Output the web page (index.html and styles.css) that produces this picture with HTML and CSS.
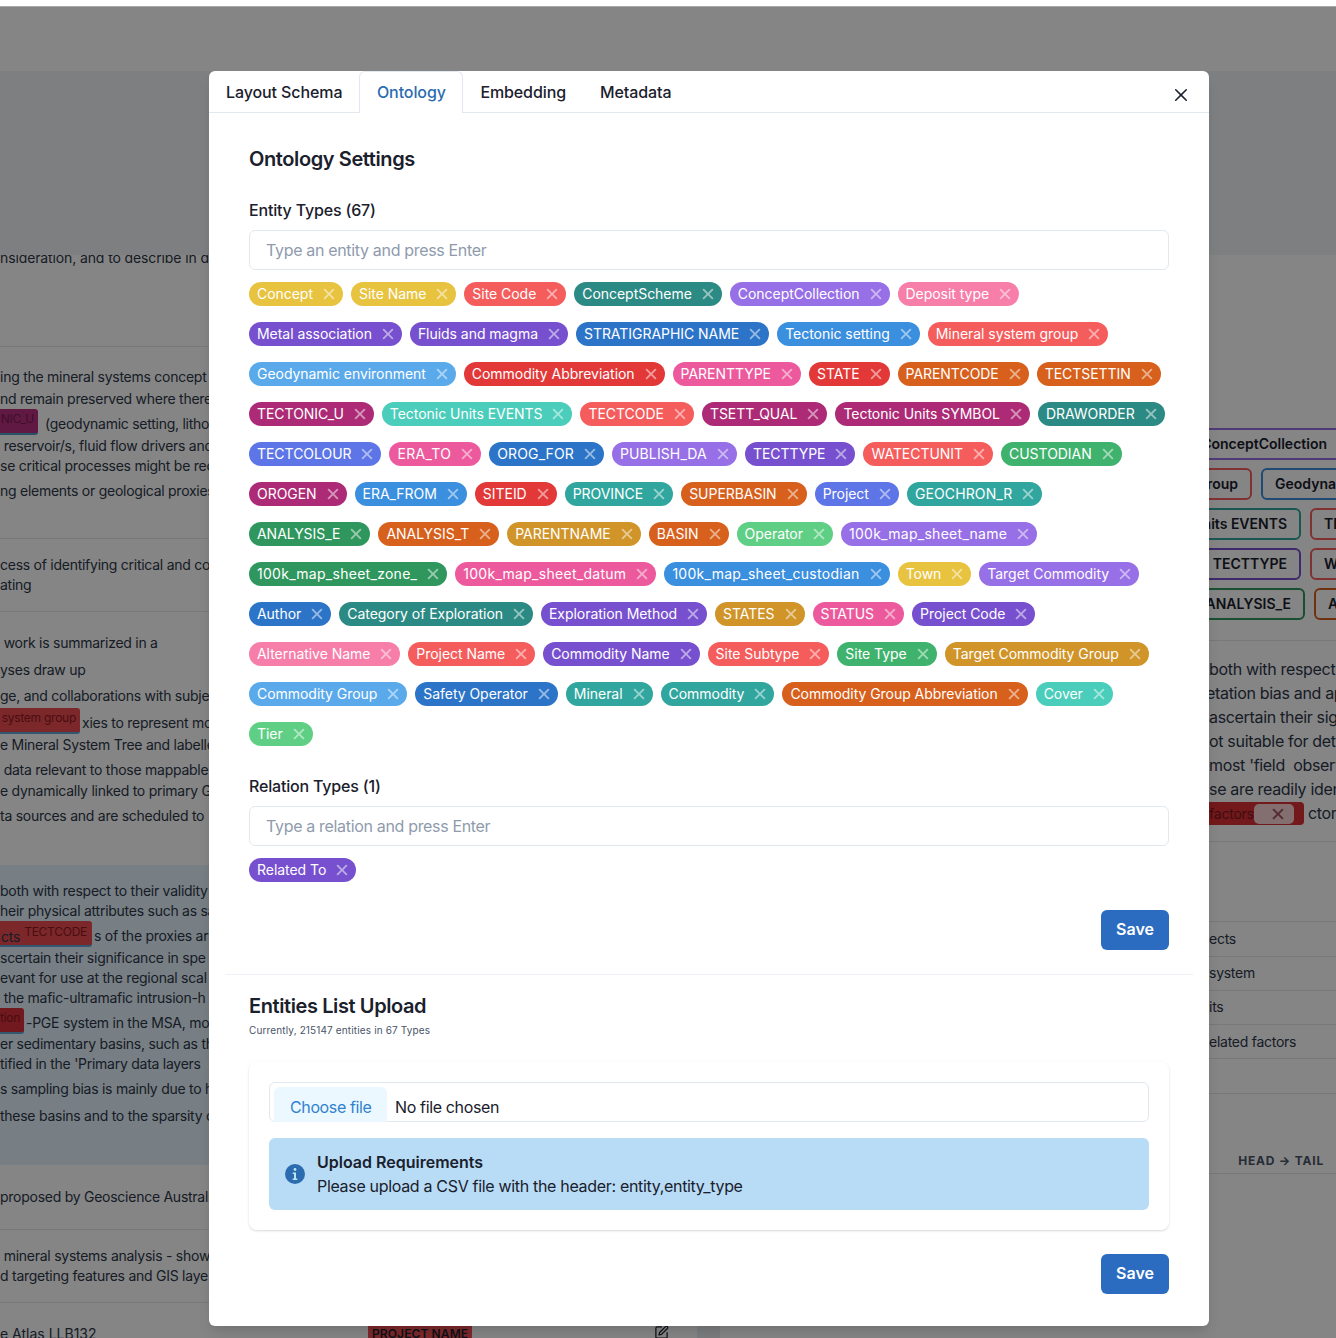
FILE: index.html
```html
<!DOCTYPE html>
<html lang="en">
<head>
<meta charset="utf-8">
<title>Ontology Settings</title>
<link rel="stylesheet" href="styles.css">
</head>
<body>
<svg class="sprite" aria-hidden="true"><symbol id="ix" viewBox="0 0 512 512"><path d="M289.94 256l95-95A24 24 0 00351 127l-95 95-95-95a24 24 0 00-34 34l95 95-95 95a24 24 0 1034 34l95-95 95 95a24 24 0 0034-34z"/></symbol></svg>
<div class="app">
  <div class="topbar"></div>
  <div class="band"></div>
  <div class="content">
    <div class="col-left">
      <div class="row ra"><div class="ln flat">nsideration, and to describe in d</div></div>
      <div class="row rb">
        <div class="ln">ing the mineral systems concept</div>
        <div class="ln mt2">nd remain preserved where there</div>
        <div class="ln mt5"><span class="chip mag w38">NIC_U</span><span class="after g7">(geodynamic setting, litho</span></div>
        <div class="ln mt2">&nbsp;reservoir/s, fluid flow drivers and</div>
        <div class="ln">se critical processes might be rec</div>
        <div class="ln mt5">ng elements or geological proxies</div>
      </div>
      <div class="row rc">
        <div class="ln">cess of identifying critical and co</div>
        <div class="ln">ating</div>
      </div>
      <div class="row rd">
        <div class="ln">&nbsp;work is summarized in a</div>
        <div class="ln mt7">yses draw up</div>
        <div class="ln mt6">ge, and collaborations with subjec</div>
        <div class="ln mt7"><span class="chip red w80">system group</span><span class="after g2">xies to represent mo</span></div>
        <div class="ln mt2">e Mineral System Tree and labelle</div>
        <div class="ln mt5">&nbsp;data relevant to those mappable</div>
        <div class="ln mt1">e dynamically linked to primary G</div>
        <div class="ln mt5">ta sources and are scheduled to</div>
      </div>
      <div class="row re">
        <div class="ln">both with respect to their validity</div>
        <div class="ln">heir physical attributes such as sa</div>
        <div class="ln mt5"><span class="chip red w92"><span class="base">cts</span><span class="raised">TECTCODE</span></span><span class="after g2">s of the proxies ar</span></div>
        <div class="ln mt2">scertain their significance in spe</div>
        <div class="ln">evant for use at the regional scal</div>
        <div class="ln">&nbsp;the mafic-ultramafic intrusion-h</div>
        <div class="ln mt5"><span class="chip crim w24">tion</span><span class="after g2">-PGE system in the MSA, mo</span></div>
        <div class="ln mt1">er sedimentary basins, such as th</div>
        <div class="ln">tified in the 'Primary data layers</div>
        <div class="ln mt5">s sampling bias is mainly due to h</div>
        <div class="ln mt7">these basins and to the sparsity c</div>
      </div>
      <div class="row rf"><div class="ln">proposed by Geoscience Australia</div></div>
      <div class="row rg">
        <div class="ln">&nbsp;mineral systems analysis - show</div>
        <div class="ln">d targeting features and GIS laye</div>
      </div>
      <div class="row rh"><div class="ln">e Atlas LLB132</div></div>
    </div>
    <div class="col-mid">
      <div class="mid-row">
        <span class="name-chip">PROJECT NAME</span>
        <svg class="edit" viewBox="0 0 24 24" fill="none" stroke="currentColor" stroke-width="2" stroke-linecap="round" stroke-linejoin="round"><path d="M12 3H5a2 2 0 0 0-2 2v14a2 2 0 0 0 2 2h14a2 2 0 0 0 2-2v-7"/><path d="M18.4 2.6a2.1 2.1 0 1 1 3 3L12 15l-4 1 1-4z"/></svg>
        <span class="mid-block"></span>
      </div>
    </div>
    <div class="col-right">
      <div class="rchips">
        <div class="rrow"><div class="slot s132"><span class="rchip b-purl">ConceptCollection</span></div></div>
        <div class="rrow"><div class="slot s43"><span class="rchip b-red4">Mineral system group</span></div><span class="rchip b-blue">Geodynamic environment</span></div>
        <div class="rrow"><div class="slot s92"><span class="rchip b-tealm">Tectonic Units EVENTS</span></div><span class="rchip b-red4">TECTCODE</span></div>
        <div class="rrow"><div class="slot s92"><span class="rchip b-purd">TECTTYPE</span></div><span class="rchip b-red4">WATECTUNIT</span></div>
        <div class="rrow"><div class="slot s96"><span class="rchip b-greend">ANALYSIS_E</span></div><span class="rchip b-orange">ANALYSIS_T</span></div>
      </div>
      <div class="rtext">
        <div class="rl">both with respect</div>
        <div class="rl">etation bias and ap</div>
        <div class="rl">ascertain their sig</div>
        <div class="rl">ot suitable for deta</div>
        <div class="rl">most 'field&nbsp; observ</div>
        <div class="rl">se are readily iden</div>
        <div class="rl"><span class="rfactor"><span>factors</span><span class="rfx"><svg class="rfx-i"><use href="#ix"/></svg></span></span><span class="after g4">ctor</span></div>
      </div>
      <div class="rgap"></div>
      <div class="trow t35">ects</div>
      <div class="trow up">system</div>
      <div class="trow up">its</div>
      <div class="trow">elated factors</div>
      <div class="trow t35"></div>
      <div class="thead">HEAD → TAIL</div>
    </div>
  </div>
</div>
<div class="overlay"></div>

<section class="modal">
  <nav class="tabs">
    <span class="tab">Layout Schema</span>
    <span class="tab active">Ontology</span>
    <span class="tab">Embedding</span>
    <span class="tab">Metadata</span>
  </nav>
  <button class="close" aria-label="Close"><svg viewBox="0 0 24 24"><path d="M.439,21.44a1.5,1.5,0,0,0,2.122,2.121L11.823,14.3a.25.25,0,0,1,.354,0l9.262,9.263a1.5,1.5,0,1,0,2.122-2.121L14.3,12.177a.25.25,0,0,1,0-.354l9.263-9.262A1.5,1.5,0,0,0,21.439.44L12.177,9.7a.25.25,0,0,1-.354,0L2.561.44A1.5,1.5,0,0,0,.439,2.561L9.7,11.823a.25.25,0,0,1,0,.354Z"/></svg></button>

  <div class="panel">
    <h2 class="h">Ontology Settings</h2>
    <label class="label first">Entity Types (67)</label>
    <input class="input" placeholder="Type an entity and press Enter">
    <div class="tags">
      <span class="tag yellow">Concept<svg class="x"><use href="#ix"/></svg></span>
      <span class="tag yellow">Site Name<svg class="x"><use href="#ix"/></svg></span>
      <span class="tag red4">Site Code<svg class="x"><use href="#ix"/></svg></span>
      <span class="tag teald">ConceptScheme<svg class="x"><use href="#ix"/></svg></span>
      <span class="tag purl">ConceptCollection<svg class="x"><use href="#ix"/></svg></span>
      <span class="tag pinkl">Deposit type<svg class="x"><use href="#ix"/></svg></span>
      <span class="tag purd">Metal association<svg class="x"><use href="#ix"/></svg></span>
      <span class="tag purd">Fluids and magma<svg class="x"><use href="#ix"/></svg></span>
      <span class="tag blued">STRATIGRAPHIC NAME<svg class="x"><use href="#ix"/></svg></span>
      <span class="tag blue">Tectonic setting<svg class="x"><use href="#ix"/></svg></span>
      <span class="tag red4">Mineral system group<svg class="x"><use href="#ix"/></svg></span>
      <span class="tag bluel">Geodynamic environment<svg class="x"><use href="#ix"/></svg></span>
      <span class="tag red6">Commodity Abbreviation<svg class="x"><use href="#ix"/></svg></span>
      <span class="tag pink">PARENTTYPE<svg class="x"><use href="#ix"/></svg></span>
      <span class="tag red6">STATE<svg class="x"><use href="#ix"/></svg></span>
      <span class="tag orange">PARENTCODE<svg class="x"><use href="#ix"/></svg></span>
      <span class="tag orange">TECTSETTIN<svg class="x"><use href="#ix"/></svg></span>
      <span class="tag mag">TECTONIC_U<svg class="x"><use href="#ix"/></svg></span>
      <span class="tag tealb">Tectonic Units EVENTS<svg class="x"><use href="#ix"/></svg></span>
      <span class="tag red4">TECTCODE<svg class="x"><use href="#ix"/></svg></span>
      <span class="tag mag">TSETT_QUAL<svg class="x"><use href="#ix"/></svg></span>
      <span class="tag mag">Tectonic Units SYMBOL<svg class="x"><use href="#ix"/></svg></span>
      <span class="tag teald">DRAWORDER<svg class="x"><use href="#ix"/></svg></span>
      <span class="tag indigo">TECTCOLOUR<svg class="x"><use href="#ix"/></svg></span>
      <span class="tag pink wide2">ERA_TO<svg class="x"><use href="#ix"/></svg></span>
      <span class="tag blued wide1">OROG_FOR<svg class="x"><use href="#ix"/></svg></span>
      <span class="tag purl wide1">PUBLISH_DA<svg class="x"><use href="#ix"/></svg></span>
      <span class="tag purd">TECTTYPE<svg class="x"><use href="#ix"/></svg></span>
      <span class="tag red4">WATECTUNIT<svg class="x"><use href="#ix"/></svg></span>
      <span class="tag green">CUSTODIAN<svg class="x"><use href="#ix"/></svg></span>
      <span class="tag mag">OROGEN<svg class="x"><use href="#ix"/></svg></span>
      <span class="tag blue">ERA_FROM<svg class="x"><use href="#ix"/></svg></span>
      <span class="tag red6">SITEID<svg class="x"><use href="#ix"/></svg></span>
      <span class="tag tealm">PROVINCE<svg class="x"><use href="#ix"/></svg></span>
      <span class="tag orange">SUPERBASIN<svg class="x"><use href="#ix"/></svg></span>
      <span class="tag indigo">Project<svg class="x"><use href="#ix"/></svg></span>
      <span class="tag tealm wide1">GEOCHRON_R<svg class="x"><use href="#ix"/></svg></span>
      <span class="tag greend">ANALYSIS_E<svg class="x"><use href="#ix"/></svg></span>
      <span class="tag orange">ANALYSIS_T<svg class="x"><use href="#ix"/></svg></span>
      <span class="tag gold">PARENTNAME<svg class="x"><use href="#ix"/></svg></span>
      <span class="tag orange">BASIN<svg class="x"><use href="#ix"/></svg></span>
      <span class="tag greenl">Operator<svg class="x"><use href="#ix"/></svg></span>
      <span class="tag purl wide3">100k_map_sheet_name<svg class="x"><use href="#ix"/></svg></span>
      <span class="tag greend wide3">100k_map_sheet_zone_<svg class="x"><use href="#ix"/></svg></span>
      <span class="tag pink wide3">100k_map_sheet_datum<svg class="x"><use href="#ix"/></svg></span>
      <span class="tag blue wide3">100k_map_sheet_custodian<svg class="x"><use href="#ix"/></svg></span>
      <span class="tag yellow">Town<svg class="x"><use href="#ix"/></svg></span>
      <span class="tag purl">Target Commodity<svg class="x"><use href="#ix"/></svg></span>
      <span class="tag blued">Author<svg class="x"><use href="#ix"/></svg></span>
      <span class="tag teald">Category of Exploration<svg class="x"><use href="#ix"/></svg></span>
      <span class="tag purd">Exploration Method<svg class="x"><use href="#ix"/></svg></span>
      <span class="tag gold">STATES<svg class="x"><use href="#ix"/></svg></span>
      <span class="tag pink">STATUS<svg class="x"><use href="#ix"/></svg></span>
      <span class="tag purd">Project Code<svg class="x"><use href="#ix"/></svg></span>
      <span class="tag pinkl">Alternative Name<svg class="x"><use href="#ix"/></svg></span>
      <span class="tag red4">Project Name<svg class="x"><use href="#ix"/></svg></span>
      <span class="tag purd">Commodity Name<svg class="x"><use href="#ix"/></svg></span>
      <span class="tag red4">Site Subtype<svg class="x"><use href="#ix"/></svg></span>
      <span class="tag green">Site Type<svg class="x"><use href="#ix"/></svg></span>
      <span class="tag gold">Target Commodity Group<svg class="x"><use href="#ix"/></svg></span>
      <span class="tag bluel">Commodity Group<svg class="x"><use href="#ix"/></svg></span>
      <span class="tag blued">Safety Operator<svg class="x"><use href="#ix"/></svg></span>
      <span class="tag tealm">Mineral<svg class="x"><use href="#ix"/></svg></span>
      <span class="tag tealm">Commodity<svg class="x"><use href="#ix"/></svg></span>
      <span class="tag orange">Commodity Group Abbreviation<svg class="x"><use href="#ix"/></svg></span>
      <span class="tag tealb">Cover<svg class="x"><use href="#ix"/></svg></span>
      <span class="tag greenl">Tier<svg class="x"><use href="#ix"/></svg></span>
    </div>
    <label class="label second">Relation Types (1)</label>
    <input class="input" placeholder="Type a relation and press Enter">
    <div class="tags">
      <span class="tag purd">Related To<svg class="x"><use href="#ix"/></svg></span>
    </div>
    <div class="actions top"><button class="save">Save</button></div>
  </div>

  <hr class="divider">

  <div class="panel lower">
    <h2 class="h">Entities List Upload</h2>
    <p class="note">Currently, 215147 entities in 67 Types</p>
    <div class="card">
      <div class="file">
        <span class="file-btn">Choose file</span>
        <span class="file-name">No file chosen</span>
      </div>
      <div class="alert">
        <svg class="alert-i" viewBox="0 0 24 24"><circle cx="12" cy="12" r="12" fill="#2b6cb0"/><circle cx="12" cy="6.6" r="1.7" fill="#bee3f8"/><path d="M9.2 10.3h4v7.2h1.6v1.6H9.2v-1.6h1.6v-5.6H9.2z" fill="#bee3f8"/></svg>
        <div>
          <div class="alert-t">Upload Requirements</div>
          <div class="alert-d">Please upload a CSV file with the header: entity,entity_type</div>
        </div>
      </div>
    </div>
    <div class="actions bottom"><button class="save">Save</button></div>
  </div>
</section>
</body>
</html>
```
FILE: styles.css
```css
* { box-sizing: border-box; }
html, body { margin: 0; padding: 0; }
body {
  position: relative;
  width: 1336px;
  height: 1338px;
  overflow: hidden;
  background: #fff;
  font-family: Inter, "Noto Sans", sans-serif;
  color: #1a202c;
}
.sprite { display: none; }

/* Page behind the dialog */
.app { display: flex; flex-direction: column; height: 1338px; }
.topbar { flex: none; height: 72px; margin-top: 6px; margin-bottom: -7px; border-top: 1px solid #a8a8a8; border-bottom: 1px solid #edeef0; }
.band { flex: none; height: 184px; background: #f2f3f5; position: relative; z-index: 1; }
.content { flex: 1; display: grid; grid-template-columns: 209px 1000px 127px; min-height: 0; overflow: hidden; font-size: 14px; letter-spacing: -.26px; color: #2d3748; }
.col-left, .col-right { overflow: hidden; white-space: nowrap; }
.row { border-bottom: 1px solid #e2e6eb; }
.ra { height: 92px; }
.rb { padding: 20px 0 37px; }
.rc { padding: 16px 0 16px; }
.rd { padding: 21px 0 39px; border-bottom: 0; }
.re { padding: 16px 0 39px; border-bottom: 0; background: #e5f3fe; }
.rf { padding: 22px 0 22px; }
.rg { padding: 16px 0 16px; }
.rh { padding: 21px 0 0; border-bottom: 0; letter-spacing: 0; }
.ln { display: flex; align-items: flex-start; height: 20px; line-height: 20px; }
.flat { height: 6px; line-height: 6px; letter-spacing: -.12px; }
.mt1 { margin-top: 1px; } .mt2 { margin-top: 2px; } .mt5 { margin-top: 5px; }
.mt6 { margin-top: 6px; } .mt7 { margin-top: 7px; }
.chip {
  flex: none; display: block; height: 26px; margin: -5px 0 -1px; padding: 0;
  border-radius: 0 3px 3px 0; border-bottom: 2px solid #63a5d8;
  font-size: 12px; line-height: 20px; text-align: right; padding-right: 4px; color: #7a1f2a;
  overflow: hidden;
}
.chip.mag { background: #b8307f; border-bottom-color: #4a9fc4; color: #7a1a58; }
.chip.red { background: #ee4c52; color: #8c1a20; }
.chip.crim { background: #d9303a; color: #8c1a20; }
.w38 { width: 38px; } .w80 { width: 80px; } .w92 { width: 92px; } .w24 { width: 24px; }
.base { font-size: 14px; position: relative; top: 6px; color: #2d3748; }
.raised { margin-left: 4px; margin-right: 1px; }
.after { flex: none; }
.g2 { margin-left: 2px; } .g4 { margin-left: 4px; } .g7 { margin-left: 7px; }

.col-mid { display: flex; flex-direction: column; justify-content: flex-end; }
.mid-row { display: flex; height: 14px; padding-left: 159px; align-items: flex-start; }
.name-chip { flex: none; width: 104px; height: 22px; line-height: 20px; padding-left: 4px; background: #ee5055; font-size: 12px; font-weight: 600; letter-spacing: .1px; white-space: nowrap; color: #1a202c; }
.edit { flex: none; width: 15px; height: 15px; margin-left: 182px; margin-top: 1px; color: #1a202c; }
.mid-block { flex: none; width: 23px; height: 14px; margin-left: 28px; background: #eceef0; }

.rchips { display: flex; flex-direction: column; gap: 8px; padding-top: 173px; letter-spacing: 0; }
.rrow { display: flex; gap: 9px; height: 32px; }
.slot { flex: none; display: flex; justify-content: flex-end; }
.s132 { width: 132px; } .s43 { width: 43px; } .s92 { width: 92px; } .s96 { width: 96px; }
.rchip { flex: none; display: block; height: 32px; padding: 0 12px; border: 2px solid; border-radius: 6px; background: #fff; font-weight: 600; line-height: 28px; color: #1a202c; }
.b-purl { border-color: #976fe6; } .b-red4 { border-color: #f56060; } .b-blue { border-color: #3b8fdf; }
.b-tealm { border-color: #30a69f; } .b-purd { border-color: #7750cf; } .b-greend { border-color: #2f975d; }
.b-orange { border-color: #d7601c; }
.rtext { margin-top: 20px; padding: 16px 0; border-top: 1px solid #e2e6eb; border-bottom: 1px solid #e2e6eb; font-size: 16px; letter-spacing: -.32px; }
.rl { display: flex; height: 24px; line-height: 24px; }
.rl:nth-child(2) { margin-left: -3px; }
.rfactor { flex: none; display: flex; align-items: center; width: 95px; height: 23px; margin-top: 1px; border-radius: 0 4px 4px 0; background: #dc2f35; color: #7a1a20; font-size: 14px; letter-spacing: -.22px; }
.rfx { display: flex; justify-content: center; width: 40px; height: 20px; padding-left: 8px; border-radius: 5px; background: #fbd5d5; }
.rfx-i { width: 20px; height: 20px; fill: #a05060; }
.rgap { height: 79px; }
.trow { height: 34px; line-height: 34px; border-top: 1px solid #e2e6eb; }
.t35 { height: 35px; }
.up { line-height: 32px; }
.thead { height: 81px; padding: 58px 12px 0 0; border-top: 1px solid #e2e6eb; border-bottom: 1px solid #e2e6eb; text-align: right; font-size: 12px; font-weight: 700; letter-spacing: .8px; line-height: 18px; color: #4a5568; }

.overlay { position: absolute; inset: 7px 0 0 0; background: rgba(0, 0, 0, .48); z-index: 2; }

/* Dialog */
.modal {
  position: absolute; top: 71px; left: 209px; width: 1000px; z-index: 3;
  background: #fff; border-radius: 6px;
  box-shadow: 0 10px 15px -3px rgba(0,0,0,.1), 0 4px 6px -2px rgba(0,0,0,.05);
}
.tabs { display: flex; height: 42px; padding-top: 1px; border-bottom: 1px solid #e2e8f0; }
.tab { height: 41px; padding: 0 16px; font-size: 16px; font-weight: 500; letter-spacing: -.1px; line-height: 38px; color: #1a202c; border: 1px solid transparent; border-bottom: 0; }
.tab.active { flex: none; width: 104px; height: 42px; margin-bottom: -1px; margin-top: -1px; line-height: 40px; text-align: center; color: #2b6cb0; background: #fff; border-color: #e2e8f0; border-radius: 6px 6px 0 0; }
.close { position: absolute; top: 18px; right: 22px; width: 12px; height: 12px; padding: 0; border: 0; background: none; }
.close svg { display: block; width: 12px; height: 12px; fill: #1a202c; }
.panel { padding: 34px 40px 0; display: flex; flex-direction: column; }
.h { margin: 0; font-size: 20px; font-weight: 600; letter-spacing: -.4px; line-height: 24px; color: #1a202c; }
.label { font-size: 16px; font-weight: 500; letter-spacing: -.18px; line-height: 24px; margin-bottom: 8px; color: #1a202c; }
.first { margin-top: 27px; }
.second { margin-top: 28px; }
.input { width: 100%; height: 40px; padding: 0 16px; border: 1px solid #e2e8f0; border-radius: 6px; font: 400 16px Inter, sans-serif; letter-spacing: -.33px; color: #1a202c; background: #fff; outline: 0; }
.input::placeholder { color: #8f9bad; opacity: 1; }
.tags { display: flex; flex-wrap: wrap; gap: 16px 8px; margin-top: 12px; }
.tag { display: inline-flex; align-items: center; height: 24px; padding: 0 4px 0 8px; border-radius: 12px; font-size: 14px; font-weight: 400; letter-spacing: -.04px; line-height: 20px; color: #fff; white-space: nowrap; }
.wide1 { letter-spacing: .12px; } .wide2 { letter-spacing: .3px; } .wide3 { letter-spacing: .28px; }
.x { flex: none; width: 20px; height: 20px; margin-left: 6px; fill: #fff; opacity: .5; }
.yellow { background: #e8c33f; } .red4 { background: #f55c5c; } .red6 { background: #e23838; }
.orange { background: #d7601c; } .gold { background: #d09428; } .green { background: #3fb36d; }
.greend { background: #2f975d; } .greenl { background: #5fcf85; } .tealb { background: #4acdbb; }
.tealm { background: #30a69f; } .teald { background: #2c8a84; } .blue { background: #3b8fdf; }
.bluel { background: #5aaaeb; } .blued { background: #2b74c8; } .indigo { background: #5d75e6; }
.purd { background: #7750cf; } .purl { background: #976fe6; } .pink { background: #ec5a9d; }
.pinkl { background: #f67ea9; } .mag { background: #ad2b76; }
.actions { display: flex; justify-content: flex-end; }
.top { margin-top: 28px; }
.bottom { margin-top: 24px; padding-bottom: 32px; }
.save { width: 68px; height: 40px; padding: 0 0 2px; border: 0; border-radius: 6px; background: #2b6cc0; color: #fff; font: 600 16px Inter, sans-serif; }
.divider { height: 1px; margin: 24px 16px 0; border: 0; background: #edf0f5; }
.lower { padding-top: 19px; }
.note { margin: 4px 0 0; font-size: 10px; letter-spacing: .14px; line-height: 16px; color: #4a5568; }
.card { margin-top: 24px; padding: 20px; border-radius: 8px; background: #fff; box-shadow: 0 1px 3px rgba(0,0,0,.1), 0 1px 2px rgba(0,0,0,.06); }
.file { display: flex; height: 40px; padding: 4px 0 0 4px; border: 1px solid #e2e8f0; border-radius: 6px; }
.file-btn { width: 113px; height: 35px; padding-left: 16px; border-radius: 6px 6px 0 0; background: #ebf8ff; color: #3182ce; font-size: 16px; letter-spacing: -.38px; line-height: 40px; }
.file-name { margin-left: 8px; font-size: 16px; letter-spacing: -.36px; line-height: 40px; color: #1a202c; }
.alert { display: flex; align-items: center; gap: 12px; height: 72px; margin-top: 16px; padding: 0 16px; border-radius: 6px; background: #b8dcf6; }
.alert-i { flex: none; width: 20px; height: 20px; }
.alert-t { font-size: 16px; font-weight: 600; line-height: 24px; }
.alert-d { font-size: 16px; letter-spacing: -.32px; line-height: 24px; }
```
